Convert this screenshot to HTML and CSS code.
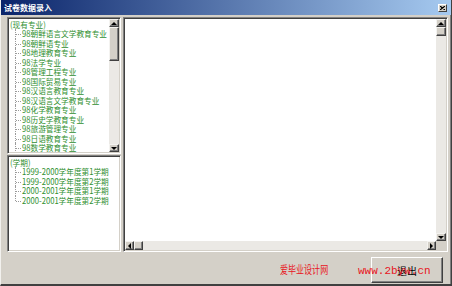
FILE: index.html
```html
<!DOCTYPE html>
<html lang="zh-CN">
<head>
  <meta charset="UTF-8" />
  <title>试卷数据录入</title>
  <link rel="stylesheet" href="styles.css">
</head>
<body>
  <div class="window">
    <!-- Title bar -->
    <div class="titlebar">
      <span class="title">试卷数据录入</span>
      <span class="close">
        <svg width="5" height="4" viewBox="0 0 5 4"><path d="M0 0L5 4M5 0L0 4" stroke="#000" stroke-width="1.2"/></svg>
      </span>
    </div>

    <div class="client">
      <div class="left">
        <!-- Majors -->
        <div class="panel tree-top">
          <ul class="tree">
            <li><span>(现有专业)</span>
              <ul class="branch">
                <li><span>98朝鲜语言文学教育专业</span></li>
                <li><span>98朝鲜语专业</span></li>
                <li><span>98地理教育专业</span></li>
                <li><span>98法学专业</span></li>
                <li><span>98管理工程专业</span></li>
                <li><span>98国际贸易专业</span></li>
                <li><span>98汉语言教育专业</span></li>
                <li><span>98汉语言文学教育专业</span></li>
                <li><span>98化学教育专业</span></li>
                <li><span>98历史学教育专业</span></li>
                <li><span>98旅游管理专业</span></li>
                <li><span>98日语教育专业</span></li>
                <li><span>98数学教育专业</span></li>
              </ul>
            </li>
          </ul>
          <div class="vscroll">
            <div class="arrow up"></div>
            <div class="thumb big"></div>
            <div class="track"></div>
            <div class="arrow down"></div>
          </div>
        </div>

        <!-- Terms -->
        <div class="panel tree-bottom">
          <ul class="tree">
            <li><span>(学期)</span>
              <ul class="branch">
                <li><span>1999-2000学年度第1学期</span></li>
                <li><span>1999-2000学年度第2学期</span></li>
                <li><span>2000-2001学年度第1学期</span></li>
                <li><span>2000-2001学年度第2学期</span></li>
              </ul>
            </li>
          </ul>
        </div>
      </div>

      <!-- Editor -->
      <div class="panel editor">
        <div class="editor-body">
          <div class="text-area"></div>
          <div class="vscroll">
            <div class="arrow up"></div>
            <div class="thumb"></div>
            <div class="track"></div>
            <div class="arrow down"></div>
          </div>
        </div>
        <div class="hscroll">
          <div class="arrow left"></div>
          <div class="thumb"></div>
          <div class="track"></div>
          <div class="arrow right"></div>
          <div class="corner"></div>
        </div>
      </div>
    </div>

    <div class="footer">
      <button class="btn">退出</button>
    </div>

    <div class="watermark"><span class="wm-cn">爱毕业设计网</span><span class="wm-url">www.2byw.cn</span></div>
  </div>
</body>
</html>
```

FILE: styles.css
```css
* { box-sizing: border-box; margin: 0; padding: 0; }

body {
  width: 452px;
  height: 286px;
  overflow: hidden;
  font-family: "Noto Sans CJK SC", "DejaVu Sans", sans-serif;
}

.window {
  position: relative;
  width: 452px;
  height: 286px;
  display: flex;
  flex-direction: column;
  background: #d4d0c8;
  border-left: 1px solid #f2f1ee;
  border-right: 1px solid #404040;
  border-bottom: 2px solid #404040;
  box-shadow: inset -1px 0 0 #808080;
}

/* title bar */
.titlebar {
  flex: none;
  height: 15px;
  display: flex;
  align-items: center;
  justify-content: space-between;
  padding: 0 4px 0 3px;
  background: linear-gradient(to right, #0a246a, #a6caf0);
}

.title {
  color: #fff;
  font-weight: bold;
  font-size: 8px;
  line-height: 15px;
}

.close {
  width: 9px;
  height: 8px;
  display: flex;
  align-items: center;
  justify-content: center;
  background: #d4d0c8;
  border: 1px solid;
  border-color: #fff #404040 #404040 #fff;
}

/* main area */
.client {
  flex: none;
  height: 237px;
  display: flex;
  gap: 2px;
  padding: 2px 3px 0 6px;
}

.left {
  width: 114px;
  display: flex;
  flex-direction: column;
  gap: 1px;
}

.panel {
  background: #fff;
  padding: 1px;
  border: 1px solid;
  border-color: #808080 #fff #fff #808080;
  box-shadow: inset 1px 1px 0 #404040, inset -1px -1px 0 #d4d0c8;
}

.tree-top { height: 137px; display: flex; overflow: hidden; }
.tree-bottom { flex: 1; overflow: hidden; }

/* tree view */
.tree {
  flex: 1;
  list-style: none;
  padding: 0.5px 0 0 1px;
  font-size: 8.5px;
  line-height: 9.5px;
  color: #2f8f2f;
  overflow: hidden;
}

.tree span {
  display: inline-block;
  white-space: nowrap;
  transform: scaleX(0.9);
  transform-origin: left;
}

.branch { list-style: none; }

.branch li {
  position: relative;
  padding-left: 12px;
}

.branch li::before {
  content: "";
  position: absolute;
  left: 5px;
  top: 0;
  bottom: 0;
  border-left: 1px dotted #9a9a9a;
}

.branch li::after {
  content: "";
  position: absolute;
  left: 6px;
  top: 5px;
  width: 5px;
  border-top: 1px dotted #9a9a9a;
}

.tree-bottom .branch li:last-child::before { bottom: auto; height: 5px; }

/* scrollbars */
.vscroll {
  flex: none;
  width: 10px;
  display: flex;
  flex-direction: column;
  background: #ebe9e5;
}

.hscroll {
  flex: none;
  height: 9px;
  display: flex;
  background: #ebe9e5;
}

.arrow, .thumb {
  flex: none;
  background: #d4d0c8;
  border: 1px solid;
  border-color: #f4f3f0 #404040 #404040 #f4f3f0;
  box-shadow: inset -1px -1px 0 #808080;
}

.arrow {
  display: flex;
  align-items: center;
  justify-content: center;
}

.vscroll .arrow { height: 8px; }
.vscroll .thumb { height: 9px; }
.vscroll .thumb.big { height: 34px; }
.hscroll .arrow, .hscroll .thumb { width: 9px; }

.track { flex: 1; }

.arrow::after { content: ""; border: 3px solid transparent; }
.arrow.up::after { border-top: 0; border-bottom-color: #000; }
.arrow.down::after { border-bottom: 0; border-top-color: #000; }
.arrow.left::after { border-left: 0; border-right-color: #000; }
.arrow.right::after { border-right: 0; border-left-color: #000; }

.corner { width: 10px; background: #d4d0c8; }

.editor {
  flex: 1;
  display: flex;
  flex-direction: column;
}

.editor-body { flex: 1; display: flex; }
.text-area { flex: 1; }

/* bottom row */
.footer {
  flex: 1;
  display: flex;
  justify-content: flex-end;
  align-items: flex-start;
  padding: 5px 8px 0 0;
}

.btn {
  width: 72px;
  height: 26px;
  font-family: inherit;
  font-size: 10px;
  color: #000;
  background: #d4d0c8;
  border: 1px solid;
  border-color: #fff #404040 #404040 #fff;
  box-shadow: inset -1px -1px 0 #808080;
}

.watermark {
  position: absolute;
  left: 279px;
  top: 261px;
  display: flex;
  align-items: baseline;
  color: #e8141c;
  pointer-events: none;
}

.wm-cn {
  display: inline-block;
  width: 78px;
  font-size: 11px;
  transform: scaleX(0.73);
  transform-origin: left;
  white-space: nowrap;
}

.wm-url {
  font-family: "Liberation Mono", monospace;
  font-size: 11px;
}
```
